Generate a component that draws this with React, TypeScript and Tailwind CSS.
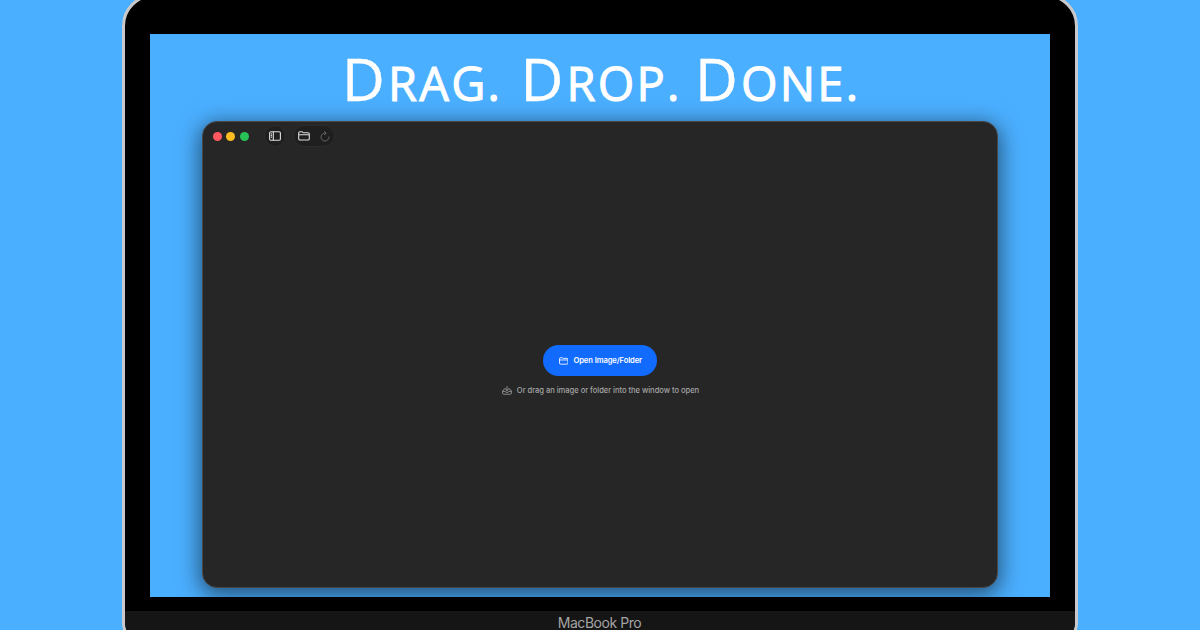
import { ReactNode } from "react"

function FolderIcon({ className }: { className: string }) {
    return (
        <svg viewBox="0 0 12 10" className={className} fill="none" stroke="currentColor" strokeWidth="1.1" strokeLinejoin="round">
            <path d="M.7 7.7V2.1Q.7.8 2 .8h1.8q.6 0 1 .5l.4.4H10q1.3 0 1.3 1.3v4.7Q11.3 9 10 9H2Q.7 9 .7 7.7ZM.7 3.7h10.6" />
        </svg>
    )
}

function Word({ first, rest, className }: { first: string; rest: ReactNode; className: string }) {
    return (
        <span className={className}>
            {first}
            <span className="text-[47px] tracking-[2.2px] [-webkit-text-stroke:1px_white]">{rest}</span>
        </span>
    )
}

// macOS window with the empty state
function AppWindow() {
    return (
        <div className="mx-auto flex h-[467.5px] w-[796px] flex-col rounded-[15px] border border-[#484848] bg-[#262626] shadow-[0_5px_22px_2px_rgba(0,0,0,0.55)]">

            {/* Toolbar */}
            <div className="flex h-[29px] items-center pl-[9.5px]">
                <div className="flex gap-[4.5px]">
                    <span className="size-[9px] rounded-full bg-[#ff5861]" />
                    <span className="size-[9px] rounded-full bg-[#fdbd20]" />
                    <span className="size-[9px] rounded-full bg-[#27c356]" />
                </div>

                <div className="ml-[16.5px] flex size-[20px] items-center justify-center rounded-full bg-[#1f1f1f] text-[#dedede] ring-1 ring-[#2b2b2b]">
                    <svg viewBox="0 0 12 10" className="h-[10px] w-[12px]" fill="none" stroke="currentColor" strokeWidth="1.1">
                        <rect x=".6" y=".7" width="10.8" height="8.6" rx="1.4" />
                        <path d="M4.3.7v8.6M1.8 2.7H3M1.8 4.4H3M1.8 6.1H3" />
                    </svg>
                </div>

                <div className="ml-[9px] flex h-[20px] w-[40px] items-center justify-between rounded-full bg-[#1f1f1f] px-[4px] text-[#dedede] ring-1 ring-[#2b2b2b]">
                    <FolderIcon className="h-[10px] w-[12px]" />
                    <svg viewBox="0 0 10 11" className="h-[11px] w-[10px] text-[#656565]" fill="none" stroke="currentColor" strokeWidth="1" strokeLinecap="round" strokeLinejoin="round">
                        <path d="M5.7 2.1A4 4 0 1 0 9 6M4.4.5l1.8 1.6-1.7 1.7" />
                    </svg>
                </div>
            </div>

            {/* Empty state */}
            <div className="flex flex-col items-center pt-[194.5px]">
                <button className="flex h-[31px] w-[114px] items-center justify-center gap-[5px] rounded-full bg-[#126bff] pl-px text-white">
                    <FolderIcon className="h-[8px] w-[9.5px]" />
                    <span className="font-['Inter',sans-serif] text-[7.6px] leading-none font-semibold tracking-[-0.09px]">Open Image/Folder</span>
                </button>

                <div className="mt-[10px] flex items-center gap-[5px] pl-px text-[#a5a5a5]">
                    <svg viewBox="0 0 10 9" className="-mt-px h-[9px] w-[10px]" fill="none" stroke="currentColor" strokeWidth=".8" strokeLinecap="round" strokeLinejoin="round">
                        <path d="M3.3 2.7h-.8L.6 5.2v2q0 1 1 1h6.8q1 0 1-1v-2L7.5 2.7h-.8M.6 5.3h2.5q.2 1.1 1.9 1.1t1.9-1.1h2.5M5 .5v4M3.6 3.3 5 4.7l1.4-1.4" />
                    </svg>
                    <span className="font-['Inter',sans-serif] text-[7.6px] leading-[10px] font-medium tracking-[-0.04px] whitespace-nowrap">Or drag an image or folder into the window to open</span>
                </div>
            </div>
        </div>
    )
}

export default function App() {
    return (
        <div className="h-[630px] w-[1200px] overflow-hidden bg-[#4bafff]">

            {/* Laptop lid */}
            <div className="mx-auto -mt-[6px] h-[654px] w-[956px] rounded-t-[32px] rounded-b-[26px] border-[3px] border-[#c9c9cb] bg-black">
                <div className="flex h-full flex-col overflow-hidden rounded-t-[29px] rounded-b-[23px] pt-[36.5px]">

                    {/* Screen */}
                    <div className="mx-auto h-[563px] w-[900px] shrink-0 overflow-hidden bg-[#4bafff]">
                        <h1 className="flex h-[87px] pl-[192px] font-['Open_Sans',sans-serif] text-[59px] leading-[89px] tracking-[3.2px] text-white [-webkit-text-stroke:0.4px_white]">
                            <Word first="D" rest="RAG." className="w-[178.5px]" />
                            <Word first="D" rest="ROP." className="w-[174.5px]" />
                            <Word first="D" rest="ONE." className="w-[170px]" />
                        </h1>
                        <AppWindow />
                    </div>

                    <div className="mt-[14.5px] h-[50px] shrink-0 bg-[#151515] text-center font-['Inter',sans-serif] text-[14px] leading-[24px] tracking-[-0.45px] text-[#a4a4a4]">
                        <span className="-ml-px">MacBook Pro</span>
                    </div>
                </div>
            </div>
        </div>
    )
}
